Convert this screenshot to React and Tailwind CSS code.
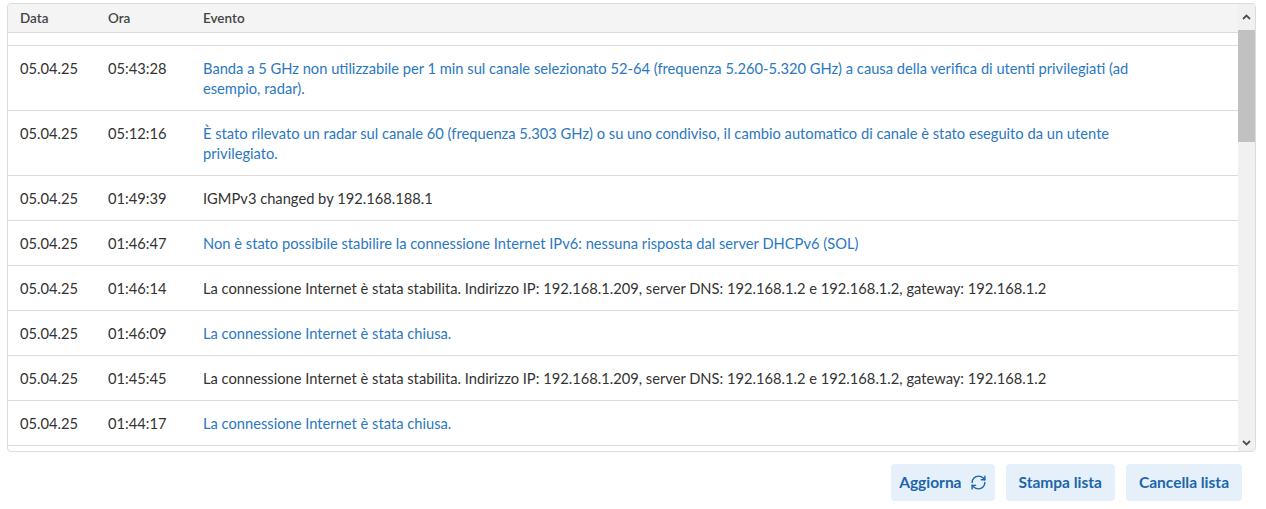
import { RefreshCw } from 'lucide-react';

const rows = [
  { date: '05.04.25', time: '05:43:28', text: 'Banda a 5 GHz non utilizzabile per 1 min sul canale selezionato 52-64 (frequenza 5.260-5.320 GHz) a causa della verifica di utenti privilegiati (ad esempio, radar).', link: true },
  { date: '05.04.25', time: '05:12:16', text: 'È stato rilevato un radar sul canale 60 (frequenza 5.303 GHz) o su uno condiviso, il cambio automatico di canale è stato eseguito da un utente privilegiato.', link: true },
  { date: '05.04.25', time: '01:49:39', text: 'IGMPv3 changed by 192.168.188.1' },
  { date: '05.04.25', time: '01:46:47', text: 'Non è stato possibile stabilire la connessione Internet IPv6: nessuna risposta dal server DHCPv6 (SOL)', link: true },
  { date: '05.04.25', time: '01:46:14', text: 'La connessione Internet è stata stabilita. Indirizzo IP: 192.168.1.209, server DNS: 192.168.1.2 e 192.168.1.2, gateway: 192.168.1.2' },
  { date: '05.04.25', time: '01:46:09', text: 'La connessione Internet è stata chiusa.', link: true },
  { date: '05.04.25', time: '01:45:45', text: 'La connessione Internet è stata stabilita. Indirizzo IP: 192.168.1.209, server DNS: 192.168.1.2 e 192.168.1.2, gateway: 192.168.1.2' },
  { date: '05.04.25', time: '01:44:17', text: 'La connessione Internet è stata chiusa.', link: true },
];

export default function App() {
  return (
    <div className="w-[1266px] h-[509px] bg-white pt-[3px] pl-[7px] text-[14.7px] text-[#333] font-['Lato','Liberation_Sans',sans-serif]">
      {/* Event table */}
      <div className="w-[1249px] h-[449px] border border-[#dcdcdc] rounded-[4px] flex overflow-hidden">
        <div className="flex-1 flex flex-col min-w-0">
          <div className="h-[29px] flex items-center bg-[#f4f4f4] border-b border-[#dcdcdc] text-[13.5px] font-semibold text-[#444] shrink-0">
            <div className="w-[100px] pl-3">Data</div>
            <div className="w-[95px]">Ora</div>
            <div>Evento</div>
          </div>
          <div className="h-[13px] border-b border-[#dcdcdc] shrink-0" />
          {rows.map((r, i) => (
            <div key={i} className="flex border-b border-[#dcdcdc] py-3 leading-5 shrink-0">
              <div className="w-[100px] pl-3 shrink-0">{r.date}</div>
              <div className="w-[95px] shrink-0">{r.time}</div>
              <div className={`max-w-[968px] ${r.link ? 'text-[#2b78c2]' : ''}`}>{r.text}</div>
            </div>
          ))}
        </div>
        {/* Scrollbar */}
        <div className="w-[17px] bg-[#f1f1f1] flex flex-col shrink-0">
          <div className="h-[26px] flex items-center justify-center">
            <svg width="9" height="6" viewBox="0 0 9 6"><path d="M1 5L4.5 1.5L8 5" fill="none" stroke="#505050" strokeWidth="1.8" /></svg>
          </div>
          <div className="h-[112px] bg-[#c1c1c1]" />
          <div className="flex-1" />
          <div className="h-[17px] flex items-center justify-center">
            <svg width="9" height="6" viewBox="0 0 9 6"><path d="M1 1L4.5 4.5L8 1" fill="none" stroke="#505050" strokeWidth="1.8" /></svg>
          </div>
        </div>
      </div>
      {/* Buttons */}
      <div className="w-[1235px] flex justify-end gap-[11px] mt-[12px] font-bold text-[15.5px] text-[#1d66ab]">
        <button className="h-[37px] px-[8px] rounded-[4px] bg-[#e5f0fa] flex items-center gap-[8px]">
          Aggiorna
          <RefreshCw size={17} strokeWidth={2} />
        </button>
        <button className="h-[37px] px-[13px] rounded-[4px] bg-[#e5f0fa]">Stampa lista</button>
        <button className="h-[37px] px-[13px] rounded-[4px] bg-[#e5f0fa]">Cancella lista</button>
      </div>
    </div>
  );
}
